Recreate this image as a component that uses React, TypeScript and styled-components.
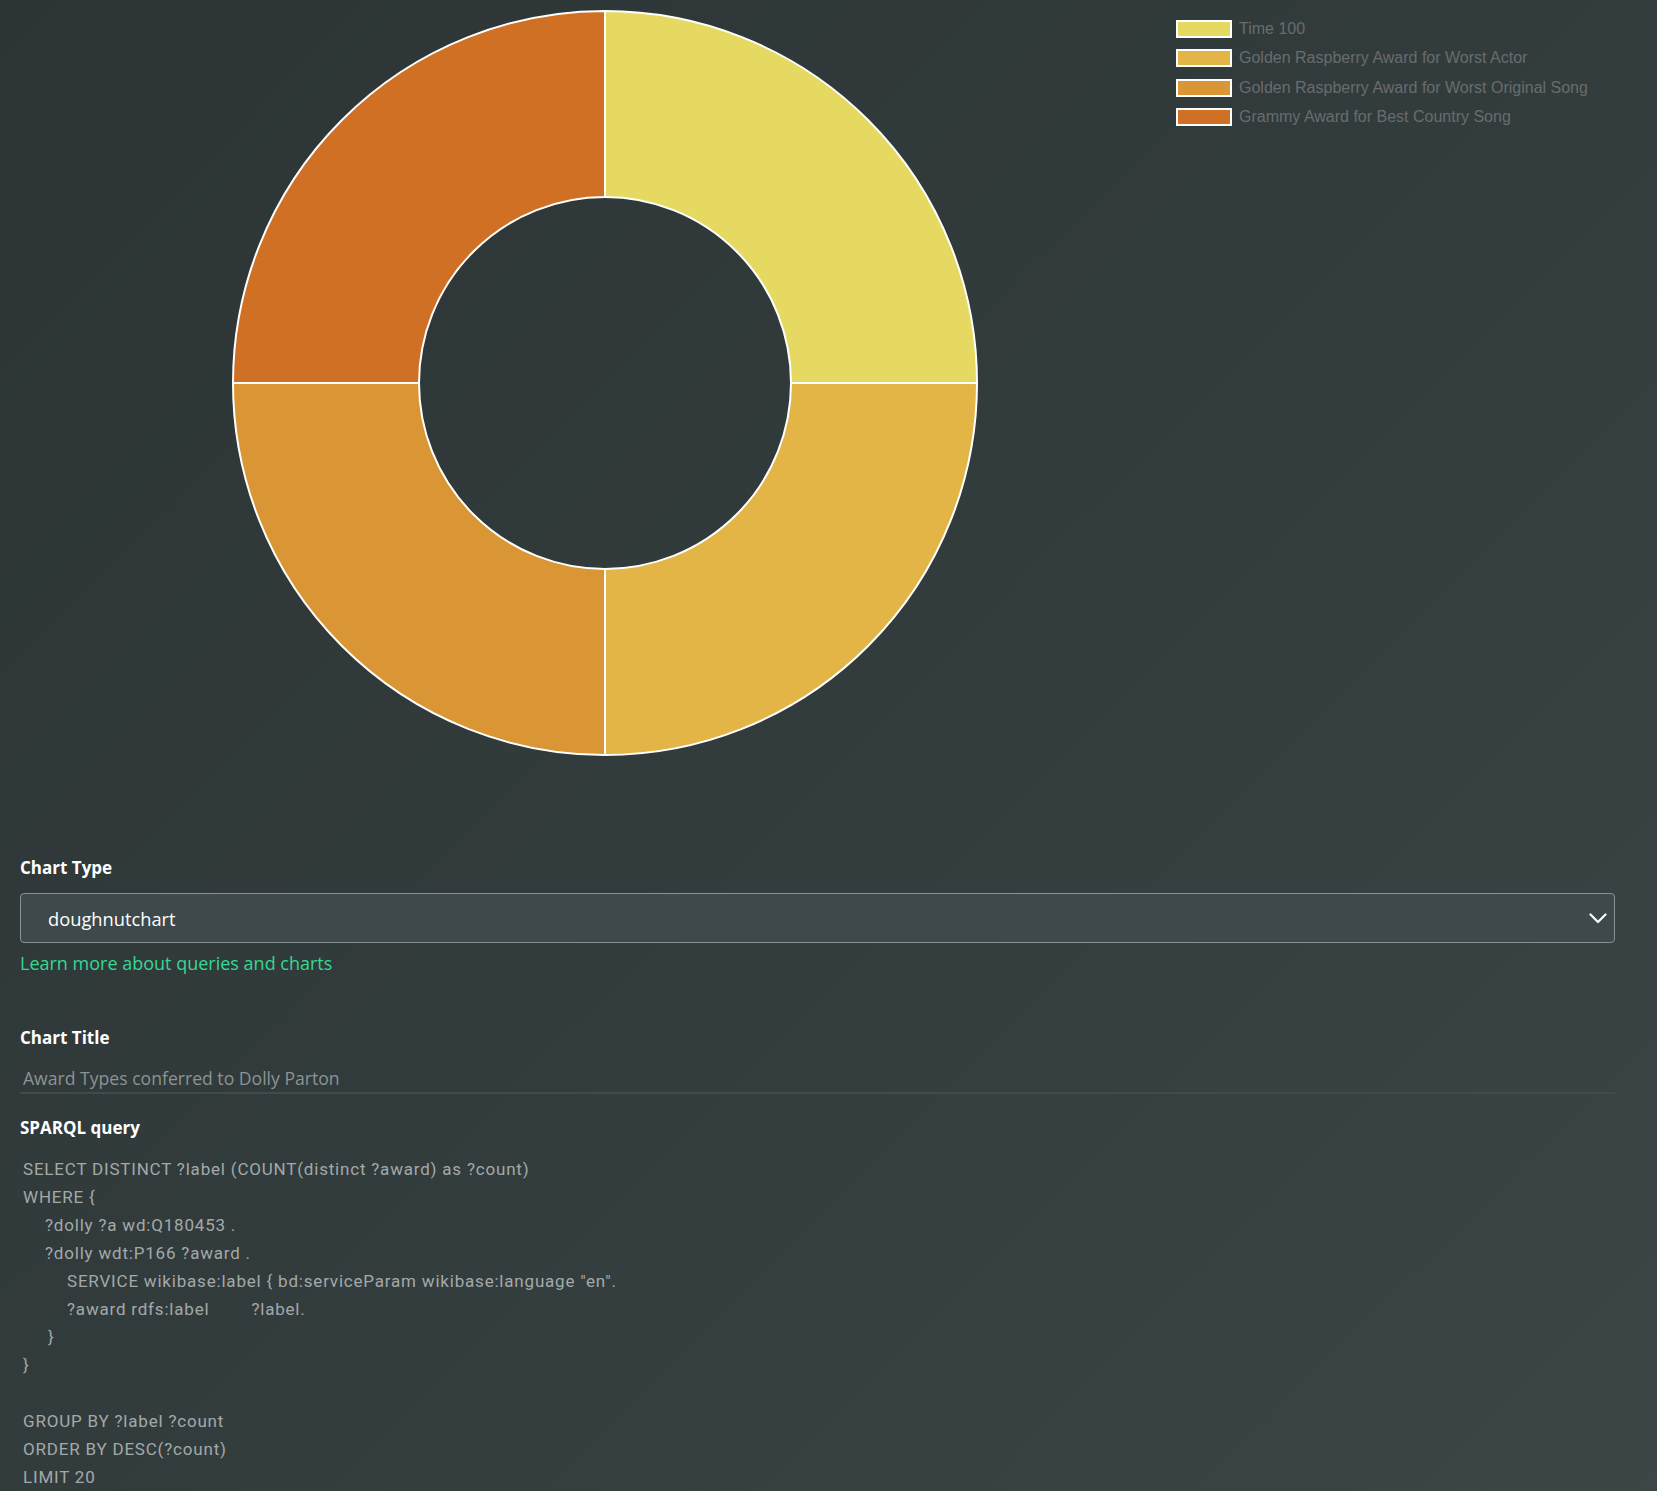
import React from "react";
import styled, { createGlobalStyle } from "styled-components";

const GlobalStyle = createGlobalStyle`
  html, body {
    margin: 0;
    padding: 0;
  }
  body {
    min-height: 1491px;
    background: linear-gradient(135deg, #2c3435 0%, #333c3d 50%, #3c4646 100%);
    font-family: "Open Sans", "Lato", sans-serif;
  }
`;

const Page = styled.div`
  padding: 0 42px 0 20px;
  min-height: 1491px;
  box-sizing: border-box;
`;

const ChartRow = styled.div`
  display: flex;
  align-items: flex-start;
  height: 800px;
  padding-top: 9px;
  box-sizing: border-box;
`;

const DonutSvg = styled.svg`
  display: block;
  margin-left: 211px;
  flex: none;
`;

const Legend = styled.ul`
  list-style: none;
  margin: 0 0 0 197px;
  padding: 11px 0 0 0;
  display: flex;
  flex-direction: column;
  gap: 11.33px;
`;

const LegendItem = styled.li`
  display: flex;
  align-items: center;
  height: 18px;
  gap: 7px;
  font-family: "Liberation Sans", Arial, sans-serif;
  font-size: 16px;
  line-height: 18px;
  color: #686c6c;
  white-space: nowrap;
`;

const Swatch = styled.span<{ $color: string }>`
  display: block;
  width: 52px;
  height: 14px;
  border: 2px solid #ffffff;
  background: ${(p) => p.$color};
  flex: none;
`;

const FieldLabel = styled.div<{ $top: number }>`
  margin-top: ${(p) => p.$top}px;
  font-family: "Open Sans", sans-serif;
  font-weight: 700;
  font-size: 17px;
  line-height: 24px;
  color: #ffffff;
`;

const SelectBox = styled.div`
  margin-top: 13px;
  height: 50px;
  box-sizing: border-box;
  border: 1px solid #879292;
  border-radius: 4px;
  background: #3d494a;
  display: flex;
  align-items: center;
  padding: 0 7px 0 27px;
  font-family: "Open Sans", sans-serif;
  font-size: 18.3px;
  color: #ffffff;
`;

const SelectValue = styled.span`
  flex: 1;
`;

const LearnLink = styled.a`
  display: block;
  margin-top: 8px;
  font-family: "Open Sans", sans-serif;
  font-size: 18px;
  line-height: 24px;
  color: #35d893;
  text-decoration: none;
`;

const TitleInput = styled.div`
  margin-top: 12px;
  padding: 4px 3px 2px 3px;
  line-height: 24px;
  font-family: "Open Sans", sans-serif;
  font-size: 17.6px;
  color: #8b9393;
  border-bottom: 2px solid #3e4c4b;
`;

const CodeBlock = styled.div`
  margin-top: 15px;
  padding-left: 3px;
  font-family: "Roboto", sans-serif;
  font-size: 17px;
  letter-spacing: 0.8px;
  line-height: 28px;
  color: #a3a9a9;
  padding-bottom: 14px;
`;

const CodeLine = styled.div<{ $indent?: number }>`
  padding-left: ${(p) => p.$indent ?? 0}px;
  height: 28px;
  white-space: pre;
`;

const Gap = styled.span<{ $w: number }>`
  display: inline-block;
  width: ${(p) => p.$w}px;
`;

const slices = [
  { label: "Time 100", color: "#e6d961" },
  { label: "Golden Raspberry Award for Worst Actor", color: "#e3b546" },
  { label: "Golden Raspberry Award for Worst Original Song", color: "#da9535" },
  { label: "Grammy Award for Best Country Song", color: "#d07024" },
];

const SIZE = 748;
const C = SIZE / 2;
const R = 372;
const RI = 186;

function pt(r: number, deg: number) {
  const a = ((deg - 90) * Math.PI) / 180;
  return [C + r * Math.cos(a), C + r * Math.sin(a)];
}

function slicePath(a0: number, a1: number) {
  const [x0, y0] = pt(R, a0);
  const [x1, y1] = pt(R, a1);
  const [x2, y2] = pt(RI, a1);
  const [x3, y3] = pt(RI, a0);
  const large = a1 - a0 > 180 ? 1 : 0;
  return `M${x0} ${y0} A${R} ${R} 0 ${large} 1 ${x1} ${y1} L${x2} ${y2} A${RI} ${RI} 0 ${large} 0 ${x3} ${y3} Z`;
}

const Chevron = () => (
  <svg width="18" height="11" viewBox="0 0 18 11" fill="none">
    <path d="M1.5 1.5 L9 9 L16.5 1.5" stroke="#ffffff" strokeWidth="2.2" strokeLinecap="round" strokeLinejoin="round" />
  </svg>
);

export default function App() {
  const step = 360 / slices.length;
  return (
    <>
      <GlobalStyle />
      <Page>
        <ChartRow>
          <DonutSvg width={SIZE} height={SIZE} viewBox={`0 0 ${SIZE} ${SIZE}`}>
            {slices.map((s, i) => (
              <path
                key={s.label}
                d={slicePath(i * step, (i + 1) * step)}
                fill={s.color}
                stroke="#ffffff"
                strokeWidth={2}
                strokeLinejoin="round"
              />
            ))}
          </DonutSvg>
          <Legend>
            {slices.map((s) => (
              <LegendItem key={s.label}>
                <Swatch $color={s.color} />
                {s.label}
              </LegendItem>
            ))}
          </Legend>
        </ChartRow>

        <FieldLabel $top={56}>Chart Type</FieldLabel>
        <SelectBox>
          <SelectValue>doughnutchart</SelectValue>
          <Chevron />
        </SelectBox>
        <LearnLink href="#">Learn more about queries and charts</LearnLink>

        <FieldLabel $top={51}>Chart Title</FieldLabel>
        <TitleInput>Award Types conferred to Dolly Parton</TitleInput>

        <FieldLabel $top={22}>SPARQL query</FieldLabel>
        <CodeBlock>
          <CodeLine>SELECT DISTINCT ?label (COUNT(distinct ?award) as ?count)</CodeLine>
          <CodeLine>WHERE {"{"}</CodeLine>
          <CodeLine $indent={22}>?dolly ?a wd:Q180453 .</CodeLine>
          <CodeLine $indent={22}>?dolly wdt:P166 ?award .</CodeLine>
          <CodeLine $indent={44}>SERVICE wikibase:label {"{"} bd:serviceParam wikibase:language "en".</CodeLine>
          <CodeLine $indent={44}>
            ?award rdfs:label<Gap $w={42} />?label.
          </CodeLine>
          <CodeLine $indent={25}>{"}"}</CodeLine>
          <CodeLine>{"}"}</CodeLine>
          <CodeLine />
          <CodeLine>GROUP BY ?label ?count</CodeLine>
          <CodeLine>ORDER BY DESC(?count)</CodeLine>
          <CodeLine>LIMIT 20</CodeLine>
        </CodeBlock>
      </Page>
    </>
  );
}
